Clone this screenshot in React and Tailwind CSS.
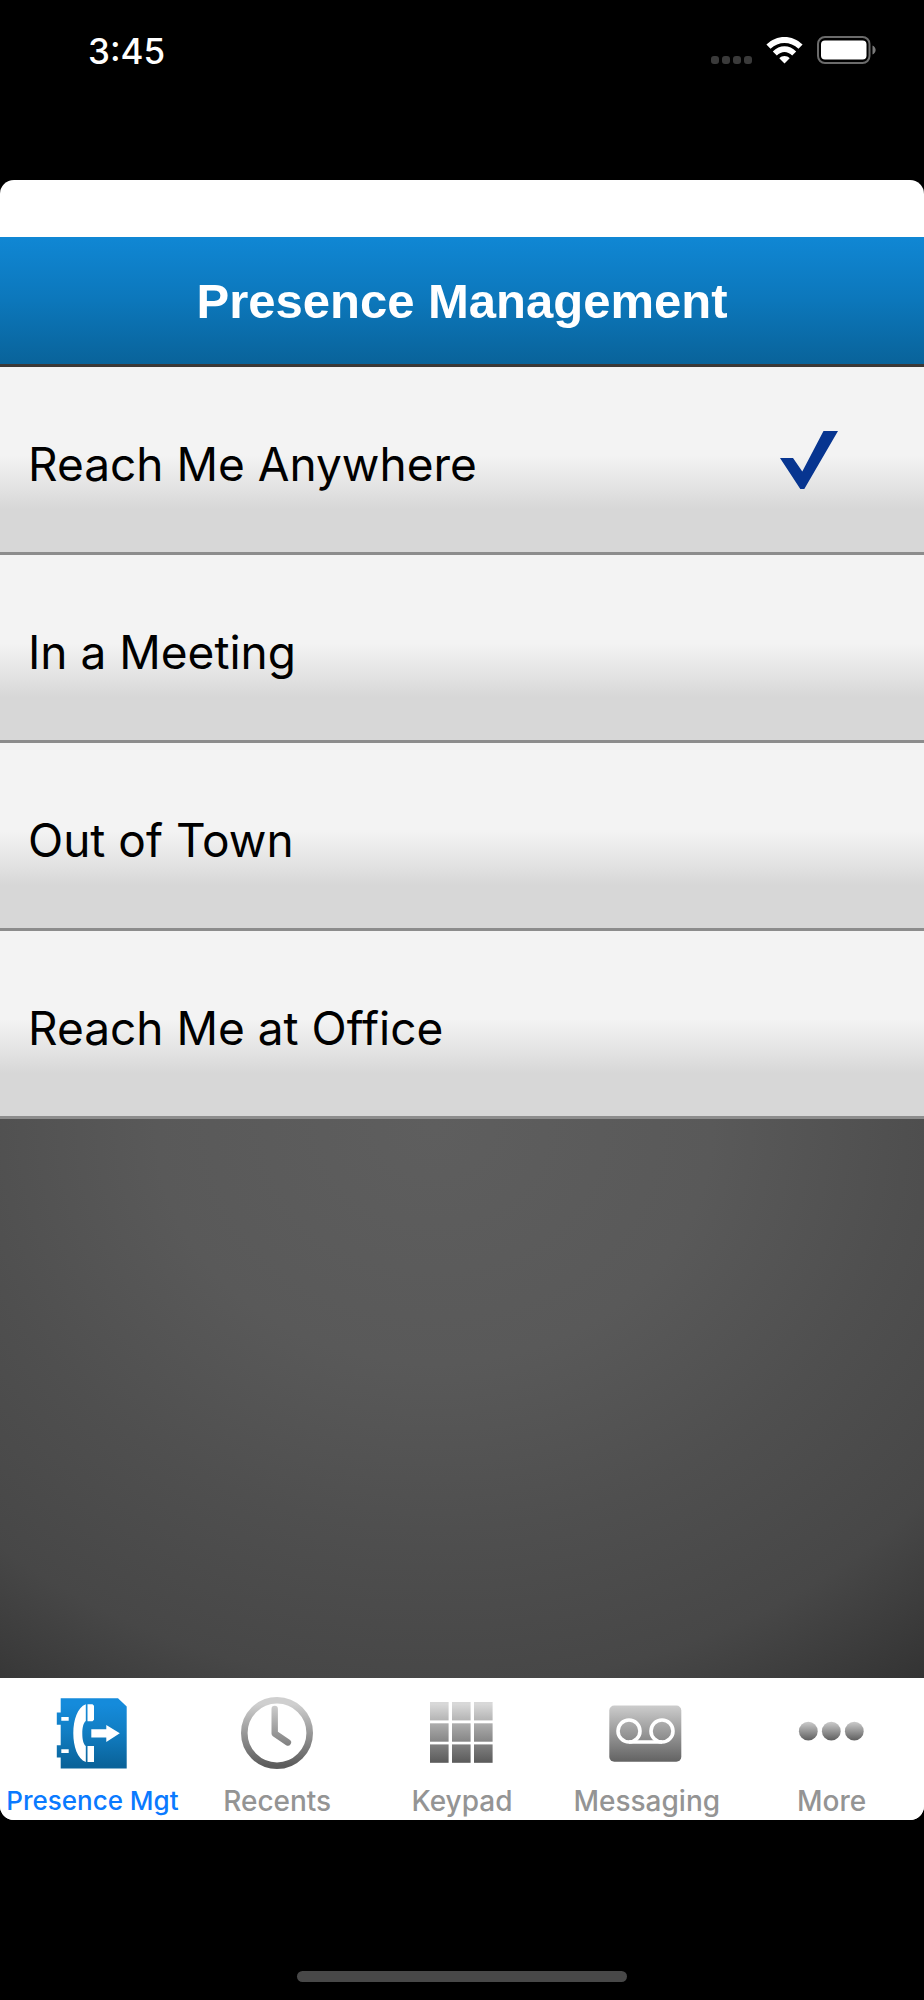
import React, { useState } from 'react';
import clsx from 'clsx';

const PRESENCES = ['Reach Me Anywhere', 'In a Meeting', 'Out of Town', 'Reach Me at Office'];

function Fade({ id, from, mid, to }) {
  return (
    <defs>
      <linearGradient id={id} gradientUnits="userSpaceOnUse" x1="0" y1="0" x2="0" y2="72">
        <stop offset="0.1" stopColor={from} />
        <stop offset="0.5" stopColor={mid} />
        <stop offset="0.95" stopColor={to} />
      </linearGradient>
    </defs>
  );
}

function BookIcon() {
  return (
    <svg viewBox="0 0 72 72" className="size-[72px]" aria-hidden="true">
      <Fade id="book" from="#158bdb" mid="#117dc2" to="#0a639a" />
      <path
        fill="url(#book)"
        d="M4.7 1.2H62l8.7 8.2v62H4.7V60.5H.8V48.3h3.9V27.8H.8V15.6h3.9z"
      />
      <g fill="#fff">
        <path d="M5.3 20h7.4v3.7H5.3zM5.3 52.2h7.4v3.7H5.3z" />
        <path d="M29.8 7.3C21.5 10.5 17.3 23 17.3 36.2S21.5 61.8 29.8 65V49C27.3 47 26.3 42.5 26.3 36.5S27.3 26 29.8 24z" />
        <path d="M31.5 7.3H36.5L38 8.8V22.8L36.5 24.3H31.5zM31.5 49H38V65H31.5z" />
        <path d="M35.3 32.3h15V28l13.5 8.3L50.3 45v-4.600h-15z" />
      </g>
    </svg>
  );
}

function ClockIcon() {
  return (
    <svg viewBox="0 0 72 72" className="size-[72px]" fill="none" stroke="url(#clock)" aria-hidden="true">
      <Fade id="clock" from="#cfcfcf" mid="#989898" to="#5c5c5c" />
      <circle cx="36" cy="36" r="32.7" strokeWidth="6.6" />
      <path d="M33.7 12v24.500l13.200 9" strokeWidth="6.4" strokeLinecap="round" strokeLinejoin="round" />
    </svg>
  );
}

function KeypadIcon() {
  return (
    <svg viewBox="0 0 72 72" className="size-[72px]" aria-hidden="true">
      <Fade id="keypad" from="#d8d8d8" mid="#989898" to="#555555" />
      {[5, 26.3, 47.4].map((y) =>
        [4, 26, 48].map((x) => (
          <rect key={`${x}-${y}`} x={x} y={y} width="18.6" height="18.4" fill="url(#keypad)" />
        ))
      )}
    </svg>
  );
}

function VoicemailIcon() {
  return (
    <svg viewBox="0 0 72 72" className="size-[72px] overflow-visible" aria-hidden="true">
      <Fade id="voicemail" from="#cfcfcf" mid="#989898" to="#5c5c5c" />
      <rect x="-1.7" y="8.5" width="72" height="56.3" rx="5" fill="url(#voicemail)" />
      <g fill="none" stroke="#fff" strokeWidth="3.6">
        <circle cx="18" cy="34" r="11" />
        <circle cx="51" cy="34" r="11" />
        <path d="M18 45h33" />
      </g>
    </svg>
  );
}

function DotsIcon() {
  return (
    <svg viewBox="0 0 72 72" className="size-[72px]" aria-hidden="true">
      <defs>
        <linearGradient id="dots" x1="0" y1="0" x2="0" y2="1">
          <stop offset="0.05" stopColor="#c6c6c6" />
          <stop offset="0.95" stopColor="#636363" />
        </linearGradient>
      </defs>
      {[12.3, 35.3, 58.3].map((x) => (
        <circle key={x} cx={x} cy="34.2" r="9.4" fill="url(#dots)" />
      ))}
    </svg>
  );
}

const TABS = [
  { label: 'Presence Mgt', Icon: BookIcon },
  { label: 'Recents', Icon: ClockIcon },
  { label: 'Keypad', Icon: KeypadIcon },
  { label: 'Messaging', Icon: VoicemailIcon },
  { label: 'More', Icon: DotsIcon },
];

function StatusBar() {
  return (
    <div className="flex h-[180px] shrink-0 items-start justify-between pl-[88px] pr-12 pt-[30px]">
      <span className="text-[35px] font-medium leading-[42px] text-white">3:45</span>
      <div className="flex gap-[14px] pt-[6px]">
        <div className="flex items-end gap-[3px]">
          {[0, 1, 2, 3].map((i) => (
            <span key={i} className="size-2 rounded-[3px] bg-[#3a3a3a]" />
          ))}
        </div>
        <svg viewBox="0 0 37 28" className="h-7 w-[37px]" fill="#fff" aria-hidden="true">
          <path d="M.4 8.6C10.5-1.7 26.5-1.7 36.6 8.6L32.5 12.7C24.5 5 12.5 5 4.5 12.7z" />
          <path d="M6.8 15.5C13.5 8.5 23.5 8.5 30.2 15.5L26.2 19.5C21.5 14.8 15.5 14.8 10.8 19.5z" />
          <path d="M13.3 22.3C16 19.2 21 19.2 23.7 22.3L18.5 27.5z" />
        </svg>
        <svg viewBox="0 0 59 28" className="h-7 w-[59px]" aria-hidden="true">
          <rect x="1" y="1" width="51.5" height="26" rx="7" fill="none" stroke="#6b6b6b" strokeWidth="2" />
          <rect x="4" y="4.5" width="45.5" height="19" rx="4" fill="#fff" />
          <path d="M55.5 9.5c4.200 1.700 4.200 7.300 0 9z" fill="#7a7a7a" />
        </svg>
      </div>
    </div>
  );
}

export default function App() {
  const [presence, setPresence] = useState(PRESENCES[0]);
  const [tab, setTab] = useState('Presence Mgt');

  return (
    <div className="flex min-h-screen flex-col bg-black font-['Inter','Liberation_Sans',sans-serif]">
      <StatusBar />

      <div className="flex flex-1 flex-col overflow-hidden rounded-[14px] bg-white pt-[57px]">
        <header className="flex h-[130px] items-center justify-center border-b-[3px] border-[#3b3836] bg-linear-to-b from-[#1087d4] via-[#0c77bb] to-[#09639a]">
          <h1 className="font-['Liberation_Sans',Arial,sans-serif] text-[49px] font-bold leading-[56px] text-white">
            Presence Management
          </h1>
        </header>

        <main className="flex flex-1 flex-col bg-[radial-gradient(ellipse_100%_60%_at_47%_58%,#5e5e5e_0%,#595959_30%,#4f4f4f_51%,#474747_71%,#333333_88%,#262626_100%)]">
          <ul>
            {PRESENCES.map((name) => (
              <li key={name}>
                <button
                  type="button"
                  aria-pressed={presence === name}
                  onClick={() => setPresence(name)}
                  className="flex h-[188px] w-full items-center justify-between border-b-[3px] border-[#8c8c8c] bg-[linear-gradient(#f3f3f3_48%,#e7e7e7_61%,#d7d7d7_77%)] pl-7 pr-[86px] text-left text-black"
                >
                  <span className="pt-2 text-[46px] leading-[56px]">{name}</span>
                  {presence === name && (
                    <svg viewBox="0 0 58 58" className="size-[58px]" aria-hidden="true">
                      <path d="M0 27h13l9.300 13.500L43.500 0H58L24.300 58h-4z" fill="#073590" />
                    </svg>
                  )}
                </button>
              </li>
            ))}
          </ul>
        </main>

        <nav className="grid h-[142px] grid-cols-5 bg-white">
          {TABS.map(({ label, Icon }) => (
            <button
              key={label}
              type="button"
              aria-current={tab === label ? 'page' : undefined}
              onClick={() => setTab(label)}
              className={clsx(
                'flex min-w-0 flex-col items-center gap-4 pt-[19px]',
                tab === label ? 'text-[26px] text-[#0a7aff]' : 'text-[28px] text-[#949494]'
              )}
            >
              <Icon />
              <span className="whitespace-nowrap font-medium leading-8">{label}</span>
            </button>
          ))}
        </nav>
      </div>

      <div className="flex h-[180px] shrink-0 items-end justify-center pb-[18px]">
        <div className="h-[11px] w-[330px] rounded-full bg-[#484848]" />
      </div>
    </div>
  );
}
